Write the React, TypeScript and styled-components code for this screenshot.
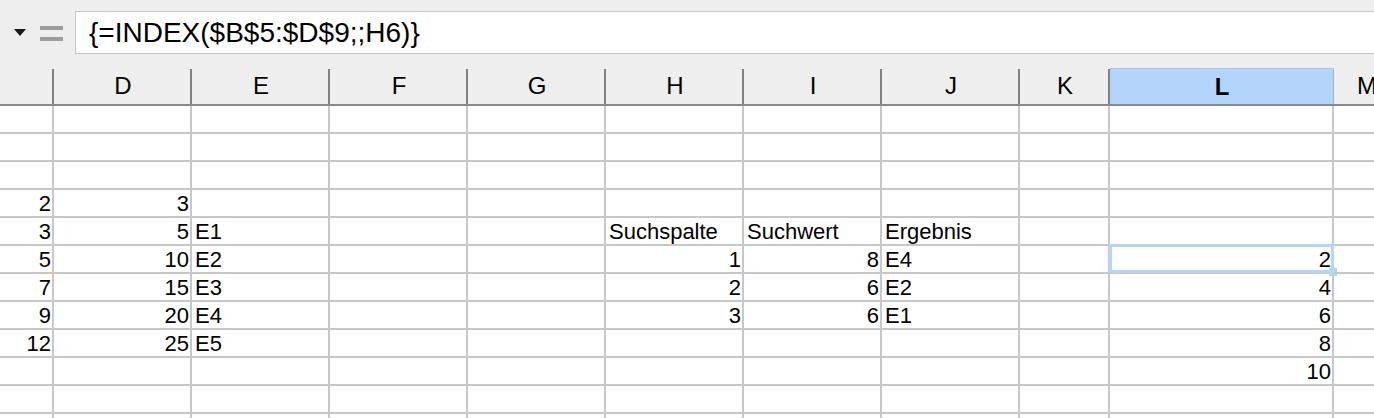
import React from 'react'
import styled, { createGlobalStyle, css } from 'styled-components'

const GlobalStyle = createGlobalStyle`
  html, body {
    margin: 0;
    padding: 0;
    background: #ffffff;
  }
  body {
    font-family: 'Liberation Sans', Arial, sans-serif;
  }
`

const Page = styled.div`
  width: 1374px;
  height: 418px;
  overflow: hidden;
  display: flex;
  flex-direction: column;
  background: #ffffff;
`

const FormulaBar = styled.div`
  height: 68px;
  flex-shrink: 0;
  box-sizing: border-box;
  padding-top: 11px;
  background: #eeeeee;
  display: flex;
  align-items: flex-start;
`

const NameBoxArrow = styled.div`
  width: 40px;
  height: 43px;
  display: flex;
  align-items: center;
  justify-content: center;
  box-sizing: border-box;
`

const EqualButton = styled.div`
  width: 35px;
  height: 43px;
  display: flex;
  align-items: center;
  justify-content: flex-start;
`

const FormulaInput = styled.div`
  flex: 1;
  height: 43px;
  box-sizing: border-box;
  margin-right: -4px;
  background: #ffffff;
  border: 1px solid #c6c6c6;
  padding-left: 13px;
  display: flex;
  align-items: center;
  font-size: 28px;
  color: #000000;
  white-space: nowrap;
`

// C is scrolled partly out of view on the left, M on the right
const COLS = [54, 138, 138, 138, 138, 138, 138, 138, 90, 224, 66]
const template = COLS.map((w) => `${w}px`).join(' ')

const Grid = styled.div`
  display: grid;
  grid-template-columns: ${template};
  width: max-content;
`

const HeaderCell = styled.div<{ $selected?: boolean }>`
  height: 38px;
  box-sizing: border-box;
  background: #eeeeee;
  border-bottom: 2px solid #8a8a8a;
  display: flex;
  align-items: center;
  justify-content: center;
  font-size: 24px;
  color: #000000;
  position: relative;
  &::after {
    content: '';
    position: absolute;
    right: 0;
    top: 1px;
    bottom: 0;
    width: 2px;
    background: #808080;
  }
  ${(p) =>
    p.$selected &&
    css`
      background: #b4d5fb;
      font-weight: 700;
      border-top: 1px solid #a9c6e8;
      &::after {
        background: #9ab4d3;
        width: 1px;
      }
    `}
`

const Cell = styled.div<{ $align: 'left' | 'right' }>`
  height: 28px;
  box-sizing: border-box;
  border-right: 2px solid #c8c8c8;
  border-bottom: 2px solid #c8c8c8;
  padding: 2px 1px 0 3px;
  display: flex;
  align-items: center;
  justify-content: ${(p) => (p.$align === 'right' ? 'flex-end' : 'flex-start')};
  font-size: 22px;
  line-height: 1;
  color: #000000;
  white-space: nowrap;
  position: relative;
`

const Selection = styled.div`
  position: absolute;
  left: -1px;
  top: -2px;
  right: -2px;
  bottom: -1px;
  border: 3px solid #b4d4fa;
  pointer-events: none;
`

const FillHandle = styled.div`
  position: absolute;
  right: -6px;
  bottom: -6px;
  width: 8px;
  height: 8px;
  background: #b4d4fa;
`

const headers = ['', 'D', 'E', 'F', 'G', 'H', 'I', 'J', 'K', 'L', 'M']

type V = string | number | null

const rows: V[][] = [
  [null, null, null, null, null, null, null, null, null, null, null],
  [null, null, null, null, null, null, null, null, null, null, null],
  [null, null, null, null, null, null, null, null, null, null, null],
  [2, 3, null, null, null, null, null, null, null, null, null],
  [3, 5, 'E1', null, null, 'Suchspalte', 'Suchwert', 'Ergebnis', null, null, null],
  [5, 10, 'E2', null, null, 1, 8, 'E4', null, 2, null],
  [7, 15, 'E3', null, null, 2, 6, 'E2', null, 4, null],
  [9, 20, 'E4', null, null, 3, 6, 'E1', null, 6, null],
  [12, 25, 'E5', null, null, null, null, null, null, 8, null],
  [null, null, null, null, null, null, null, null, null, 10, null],
  [null, null, null, null, null, null, null, null, null, null, null],
  [null, null, null, null, null, null, null, null, null, null, null],
]

const SELECTED = { row: 5, col: 9 }

const App = () => {
  return (
    <>
      <GlobalStyle />
      <Page>
        <FormulaBar>
          <NameBoxArrow>
            <svg width="12" height="7" viewBox="0 0 12 7">
              <path d="M0 0 L12 0 L6 7 Z" fill="#1a1a1a" />
            </svg>
          </NameBoxArrow>
          <EqualButton>
            <svg width="24" height="16" viewBox="0 0 24 16">
              <rect x="0" y="1" width="23" height="4" fill="#9c9c9c" />
              <rect x="0" y="12" width="23" height="4" fill="#9c9c9c" />
            </svg>
          </EqualButton>
          <FormulaInput>{'{=INDEX($B$5:$D$9;;H6)}'}</FormulaInput>
        </FormulaBar>
        <Grid>
          {headers.map((h, i) => (
            <HeaderCell key={`h${i}`} $selected={i === SELECTED.col}>
              {h}
            </HeaderCell>
          ))}
          {rows.map((row, r) =>
            row.map((v, c) => {
              const selected = r === SELECTED.row && c === SELECTED.col
              return (
                <Cell key={`${r}-${c}`} $align={typeof v === 'number' ? 'right' : 'left'}>
                  {v}
                  {selected && (
                    <Selection>
                      <FillHandle />
                    </Selection>
                  )}
                </Cell>
              )
            })
          )}
        </Grid>
      </Page>
    </>
  )
}

export default App
